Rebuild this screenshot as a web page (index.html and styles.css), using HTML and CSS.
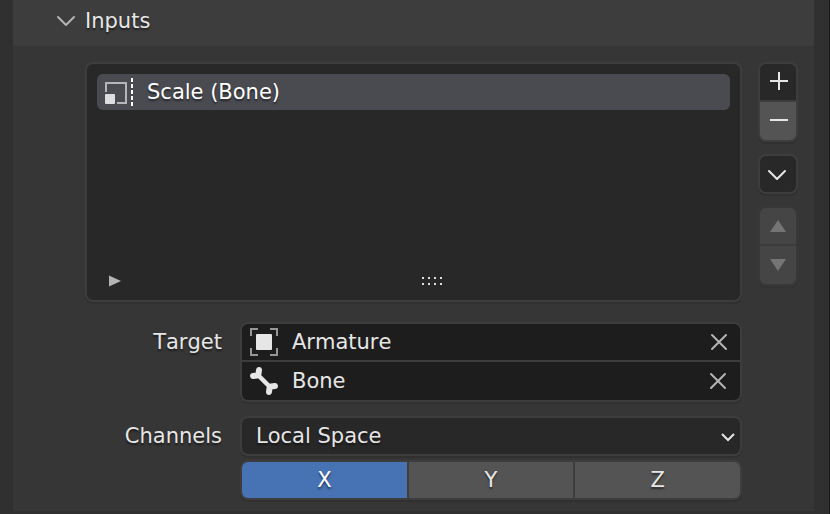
FILE: index.html
```html
<!DOCTYPE html>
<html lang="en">
<head>
<meta charset="utf-8">
<meta name="viewport" content="width=device-width, initial-scale=1">
<title>Inputs</title>
<link rel="stylesheet" href="styles.css">
</head>
<body>
<main class="editor">
  <section class="panel">
    <h2 class="panel-header">
      <button class="panel-toggle" type="button" aria-expanded="true">
        <svg width="20" height="12" viewBox="0 0 20 12" aria-hidden="true"><path d="M2 2l8 8 8-8" fill="none" stroke="#b4b4b4" stroke-width="2" stroke-linecap="round" stroke-linejoin="round"/></svg>
        <span>Inputs</span>
      </button>
    </h2>
    <div class="panel-body">
      <div class="variables">
        <div class="list">
          <ul class="list-items">
            <li class="list-item">
              <svg width="32" height="30" viewBox="0 0 32 30" aria-hidden="true">
                <path d="M2 15V6H22V26H13" fill="none" stroke="#b5b6b9" stroke-width="2"/>
                <rect x="1" y="17" width="10" height="10" rx="1" fill="#dddee0"/>
                <path d="M28 1v28" stroke="#fff" stroke-width="2" stroke-dasharray="4 2"/>
              </svg>
              <span>Scale (Bone)</span>
            </li>
          </ul>
          <div class="list-footer">
            <button class="filter" type="button" aria-label="Show filter"><svg width="12" height="12" viewBox="0 0 12 12" aria-hidden="true"><path d="M0 .5L12 6 0 11.500z" fill="#b4b4b4"/></svg></button>
            <svg class="grip" width="22" height="8" viewBox="0 0 22 8" aria-hidden="true"><path d="M0 1h22M0 7h22" stroke="#dcdcdc" stroke-width="2" stroke-dasharray="2 4"/></svg>
          </div>
        </div>
        <div class="tools">
          <div class="group stack">
            <button class="tool dark" type="button" aria-label="Add"><svg width="18" height="18" viewBox="0 0 18 18" aria-hidden="true"><path d="M10 -1v18M1 8h18" stroke="#e6e6e6" stroke-width="2"/></svg></button>
            <button class="tool tall" type="button" aria-label="Remove"><svg width="18" height="18" viewBox="0 0 18 18" aria-hidden="true"><path d="M1 8h18" stroke="#e6e6e6" stroke-width="2"/></svg></button>
          </div>
          <div class="group stack">
            <button class="tool dark" type="button" aria-label="Specials"><svg width="20" height="12" viewBox="0 0 20 12" aria-hidden="true"><path d="M1 3l8 8 8-8" fill="none" stroke="#e6e6e6" stroke-width="2" stroke-linecap="round" stroke-linejoin="round"/></svg></button>
          </div>
          <div class="group stack muted">
            <button class="tool" type="button" aria-label="Move up" disabled><svg width="16" height="12" viewBox="0 0 16 12" aria-hidden="true"><path d="M8 0l8 12H0z" fill="#757575"/></svg></button>
            <button class="tool tall" type="button" aria-label="Move down" disabled><svg width="16" height="12" viewBox="0 0 16 12" aria-hidden="true"><path d="M8 12l8-12H0z" fill="#757575"/></svg></button>
          </div>
        </div>
      </div>
      <form class="settings">
        <label class="label" for="target">Target</label>
        <div class="group stack">
          <div class="field">
            <svg width="28" height="28" viewBox="0 0 28 28" aria-hidden="true">
              <path d="M1 8V1h7M20 1h7v7M27 20v7h-7M8 27H1v-7" fill="none" stroke="#969696" stroke-width="2"/>
              <rect x="6" y="6" width="16" height="16" rx="1" fill="#e6e6e6"/>
            </svg>
            <input id="target" type="text" value="Armature">
            <button class="clear" type="button" aria-label="Clear target"><svg width="18" height="18" viewBox="0 0 18 18" aria-hidden="true"><path d="M2 2l14 14M16 2L2 16" stroke="#b4b4b4" stroke-width="2" stroke-linecap="round"/></svg></button>
          </div>
          <div class="field tall">
            <svg width="28" height="28" viewBox="0 0 28 28" aria-hidden="true">
              <path d="M7 7l14 14" stroke="#e6e6e6" stroke-width="4.500"/>
              <path d="M9 3l-.5 4M3 9l4-.5M19 25l.5-4M25 19l-4 .5" stroke="#e6e6e6" stroke-width="6" stroke-linecap="round"/>
            </svg>
            <input type="text" value="Bone" aria-label="Bone">
            <button class="clear" type="button" aria-label="Clear bone"><svg width="18" height="18" viewBox="0 0 18 18" aria-hidden="true"><path d="M1 2l14 14M15 2L1 16" stroke="#b4b4b4" stroke-width="2" stroke-linecap="round"/></svg></button>
          </div>
        </div>
        <label class="label" for="space">Channels</label>
        <div class="channel-controls">
          <div class="group select">
            <select id="space"><option>Local Space</option><option>World Space</option></select>
            <svg width="14" height="10" viewBox="0 0 14 10" aria-hidden="true"><path d="M1 2l6 6 6-6" fill="none" stroke="#e6e6e6" stroke-width="2"/></svg>
          </div>
          <div class="group axes">
            <button class="axis active" type="button" aria-pressed="true">X</button>
            <button class="axis" type="button" aria-pressed="false">Y</button>
            <button class="axis" type="button" aria-pressed="false">Z</button>
          </div>
        </div>
      </form>
    </div>
  </section>
</main>
</body>
</html>
```
FILE: styles.css
```css
* {
  box-sizing: border-box;
}

body {
  margin: 0;
  background: #303030;
  color: #e6e6e6;
  font: 21px/28px "DejaVu Sans", sans-serif;
  font-kerning: none;
}

button,
input,
select {
  margin: 0;
  padding: 0;
  border: 0;
  background: none;
  color: inherit;
  font: inherit;
  font-kerning: none;
}

svg {
  display: block;
  flex: none;
  overflow: visible;
}

.editor {
  min-height: 100vh;
  padding: 0 15px 3px 13px;
  border-right: 1px solid #161616;
}

.panel {
  background: #363636;
}

.panel-header {
  margin: 0;
  padding: 7px 43px 11px;
  background: #3d3d3d;
  font: inherit;
}

.panel-toggle {
  display: flex;
  align-items: center;
  gap: 9px;
  text-shadow: 0 2px 2px rgba(0, 0, 0, 0.5);
}

.panel-body {
  padding: 16px 16px 11px 72px;
}

.variables {
  display: grid;
  grid-template-columns: 1fr 40px;
  gap: 16px;
}

.list {
  display: flex;
  flex-direction: column;
  justify-content: space-between;
  height: 240px;
  padding: 10px;
  border: 2px solid #3d3d3d;
  border-radius: 8px;
  background: #282828;
  box-shadow: 0 2px 0 #303030;
}

.list-items {
  margin: 0;
  padding: 0;
  list-style: none;
}

.list-item {
  display: flex;
  align-items: center;
  gap: 11px;
  height: 36px;
  padding: 0 7px;
  border-radius: 6px;
  background: #4a4b51;
  color: #fff;
  text-shadow: 0 2px 2px rgba(0, 0, 0, 0.5);
}

.list-footer {
  display: grid;
  grid-template-columns: 1fr auto 1fr;
  align-items: center;
  padding: 0 0 3px 12px;
}

.grip {
  margin-left: 26px;
}

.tools {
  display: flex;
  flex-direction: column;
  gap: 12px;
}

.group {
  overflow: hidden;
  border: 2px solid #3d3d3d;
  border-radius: 8px;
  background: #3d3d3d;
  box-shadow: 0 2px 0 #303030;
}

.stack {
  display: grid;
  gap: 2px;
}

.muted {
  border-color: #383838;
  background: #3b3b3b;
  box-shadow: 0 2px 0 #333;
}

.tool {
  display: grid;
  place-items: center;
  height: 36px;
  background: #545454;
}

.tool.dark {
  background: #282828;
}

.muted .tool {
  background: #454545;
}

.tool.tall,
.field.tall {
  height: 38px;
}

.settings {
  display: grid;
  grid-template-columns: 137px 1fr;
  gap: 14px 18px;
  margin: 20px 56px 0 0;
}

.label {
  padding-top: 6px;
  text-align: right;
  text-shadow: 0 2px 2px rgba(0, 0, 0, 0.5);
}

.field {
  display: flex;
  align-items: center;
  height: 36px;
  padding: 0 12px 0 8px;
  background: #1d1d1d;
}

.field input {
  flex: 1;
  min-width: 0;
  padding-left: 14px;
}

.channel-controls {
  display: grid;
  gap: 4px;
}

.select {
  display: grid;
  grid-template-columns: 1fr auto;
  align-items: center;
  background: #282828;
}

.select select,
.select svg {
  grid-row: 1;
}

.select select {
  grid-column: 1 / 3;
  height: 36px;
  padding-left: 14px;
  appearance: none;
  text-shadow: 0 2px 2px rgba(0, 0, 0, 0.5);
}

.select svg {
  grid-column: 2;
  margin: 2px 5px 0 0;
  pointer-events: none;
}

.axes {
  display: grid;
  grid-template-columns: repeat(3, 1fr);
  gap: 2px;
}

.axis {
  height: 36px;
  background: #545454;
  text-shadow: 0 2px 2px rgba(0, 0, 0, 0.5);
}

.axis.active {
  background: #4772b3;
  color: #fff;
}
```
